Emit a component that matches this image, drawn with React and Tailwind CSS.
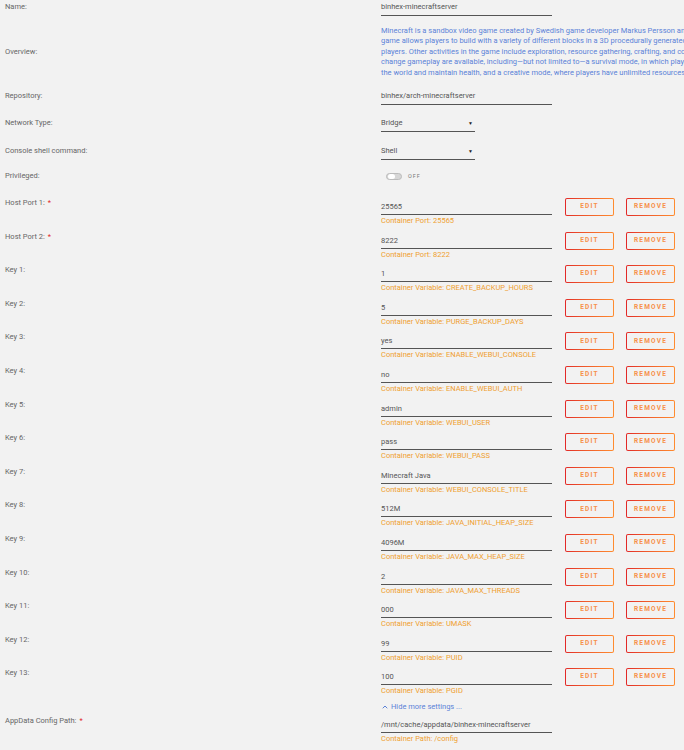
import { ChevronUp } from "lucide-react";

const overview = [
  "Minecraft is a sandbox video game created by Swedish game developer Markus Persson and later developed by Mojang. The",
  "game allows players to build with a variety of different blocks in a 3D procedurally generated world, requiring creativity from",
  "players. Other activities in the game include exploration, resource gathering, crafting, and combat. Multiple gameplay modes that",
  "change gameplay are available, including—but not limited to—a survival mode, in which players must acquire resources to build",
  "the world and maintain health, and a creative mode, where players have unlimited resources to build with.",
];

const ports = [
  { label: "Host Port 1:", value: "25565", note: "Container Port: 25565", required: true },
  { label: "Host Port 2:", value: "8222", note: "Container Port: 8222", required: true },
];

const keys = [
  ["1", "CREATE_BACKUP_HOURS"],
  ["5", "PURGE_BACKUP_DAYS"],
  ["yes", "ENABLE_WEBUI_CONSOLE"],
  ["no", "ENABLE_WEBUI_AUTH"],
  ["admin", "WEBUI_USER"],
  ["pass", "WEBUI_PASS"],
  ["Minecraft Java", "WEBUI_CONSOLE_TITLE"],
  ["512M", "JAVA_INITIAL_HEAP_SIZE"],
  ["4096M", "JAVA_MAX_HEAP_SIZE"],
  ["2", "JAVA_MAX_THREADS"],
  ["000", "UMASK"],
  ["99", "PUID"],
  ["100", "PGID"],
];

function Label({ children, required, className = "" }) {
  return (
    <div className={`w-[381px] shrink-0 pl-[5px] text-[#666] ${className}`}>
      {children}
      {required && <span className="ml-[3px] text-[#e22828]">*</span>}
    </div>
  );
}

function OutlineButton({ children }) {
  return (
    <div className="self-start rounded-[2px] bg-linear-to-r from-[#e22828] to-[#ff8c2f] p-px">
      <div className="flex h-[16px] w-[47px] items-center justify-center rounded-[1px] bg-[#f2f2f2] text-[6.5px] font-bold tracking-[1.2px] text-[#f7904a]">
        {children}
      </div>
    </div>
  );
}

function TextField({ value }) {
  return (
    <div className="h-[16px] w-[171px] border-b border-[#555] leading-[14px] text-[#555]">
      {value}
    </div>
  );
}

function Select({ value }) {
  return (
    <div className="flex h-[16px] w-[94px] justify-between border-b border-[#555] pr-[2px] leading-[14px] text-[#555]">
      <span>{value}</span>
      <span className="text-[5px] text-[#222]">▼</span>
    </div>
  );
}

function ConfigRow({ label, required, value, note, actions = true }) {
  return (
    <div className="flex h-[33.6px] items-start">
      <Label required={required} className="leading-[12px]">
        {label}
      </Label>
      <div className="pt-[3px]">
        <div className="h-[15px] w-[171px] border-b border-[#555] leading-[14px] text-[#555]">{value}</div>
        <div className="mt-[1px] leading-[10px] text-[#f0a030]">{note}</div>
      </div>
      {actions && (
        <div className="ml-[13px] flex items-start gap-[12px] pt-px">
          <OutlineButton>EDIT</OutlineButton>
          <OutlineButton>REMOVE</OutlineButton>
        </div>
      )}
    </div>
  );
}

export default function App() {
  return (
    <div className="h-[750px] w-[684px] overflow-hidden bg-[#f2f2f2] font-['Roboto',sans-serif] text-[7.5px]">
      {/* Basic info */}
      <div className="flex leading-[14px]">
        <Label>Name:</Label>
        <TextField value="binhex-minecraftserver" />
      </div>

      <div className="mt-[10px] flex items-center">
        <Label>Overview:</Label>
        <div className="whitespace-nowrap leading-[10.4px] text-[#5b82d8]">
          {overview.map((line) => (
            <div key={line}>{line}</div>
          ))}
        </div>
      </div>

      <div className="mt-[11px] flex leading-[14px]">
        <Label>Repository:</Label>
        <TextField value="binhex/arch-minecraftserver" />
      </div>

      <div className="mt-[11px] flex leading-[14px]">
        <Label>Network Type:</Label>
        <Select value="Bridge" />
      </div>

      <div className="mt-[12px] flex leading-[14px]">
        <Label>Console shell command:</Label>
        <Select value="Shell" />
      </div>

      <div className="mt-[9px] flex items-center leading-[14px]">
        <Label>Privileged:</Label>
        <div className="ml-[5px] flex items-center gap-[6px]">
          <div className="flex h-[7px] w-[16px] items-center rounded-full border border-[#bbb] bg-[#d6d6d6] px-px">
            <div className="h-[5px] w-[7px] rounded-full bg-white" />
          </div>
          <span className="text-[5.5px] tracking-[1px] text-[#777]">OFF</span>
        </div>
      </div>

      {/* Ports and variables */}
      <div className="mt-[14px]">
        {ports.map((p) => (
          <ConfigRow key={p.label} label={p.label} required={p.required} value={p.value} note={p.note} />
        ))}
        {keys.map(([value, name], i) => (
          <ConfigRow
            key={name}
            label={`Key ${i + 1}:`}
            value={value}
            note={`Container Variable: ${name}`}
          />
        ))}
      </div>

      <div className="flex h-[12px] items-center leading-[12px]">
        <div className="w-[381px] shrink-0" />
        <div className="flex items-center gap-[2px] text-[#5b82d8]">
          <ChevronUp size={8} strokeWidth={3} />
          <span>Hide more settings ...</span>
        </div>
      </div>

      <div className="mt-[2px]">
        <ConfigRow
          label="AppData Config Path:"
          required
          value="/mnt/cache/appdata/binhex-minecraftserver"
          note="Container Path: /config"
          actions={false}
        />
      </div>
    </div>
  );
}
